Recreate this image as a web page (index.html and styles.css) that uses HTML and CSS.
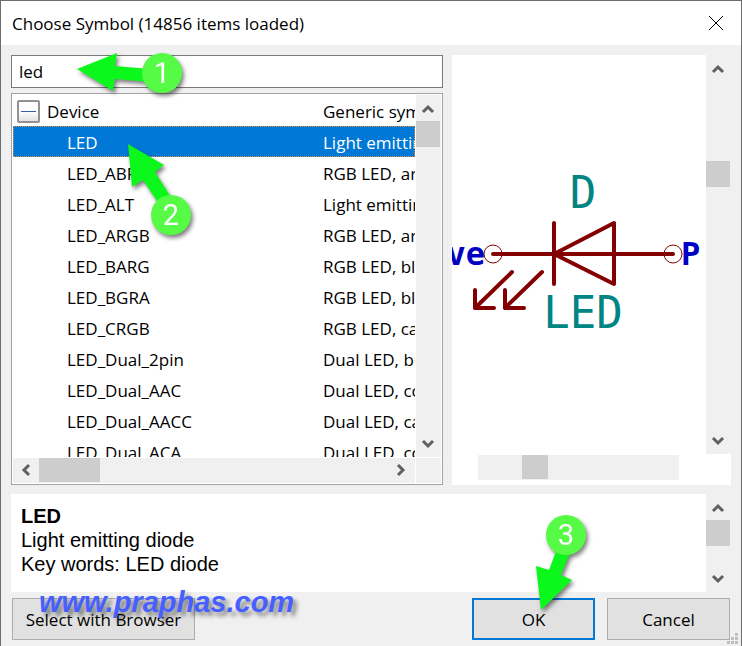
FILE: index.html
```
<!DOCTYPE html>
<html lang="en">

<head>
    <meta charset="UTF-8">
    <meta name="viewport" content="width=device-width, initial-scale=1.0">
    <title>Choose Symbol</title>
    <link rel="stylesheet" href="styles.css">
</head>

<body>

    <svg class="defs" aria-hidden="true">
        <symbol id="up" viewBox="0 0 12 10"><path d="M0 9L5 4L10 9" /></symbol>
        <symbol id="down" viewBox="0 0 12 10"><path d="M0 2L5 7L10 2" /></symbol>
        <symbol id="left" viewBox="0 0 10 12"><path d="M8 0L3 5L8 10" /></symbol>
        <symbol id="right" viewBox="0 0 10 12"><path d="M1 0L6 5L1 10" /></symbol>
    </svg>

    <div class="dialog">
        <header class="titlebar">
            <h1>Choose Symbol (14856 items loaded)</h1>
            <button class="close" aria-label="Close">
                <svg width="16" height="16" viewBox="0 0 16 16"><path d="M1 1L15 15M15 1L1 15" /></svg>
            </button>
        </header>

        <main class="panes">
            <div class="chooser">
                <div class="search">
                    <input type="text" value="led" aria-label="Filter">
                    <svg class="callout callout-1" width="120" height="60" viewBox="70 45 120 60">
                        <path d="M77 69L117 53L115 66L150 69V82L115 79L113 91Z" />
                        <circle cx="162" cy="73" r="20" />
                        <text x="162" y="83">1</text>
                    </svg>
                </div>

                <div class="tree">
                    <div class="tree-view">
                        <table>
                            <colgroup>
                                <col class="col-name">
                                <col>
                            </colgroup>
                            <tr class="lib">
                                <td><button class="toggle" aria-label="Collapse"></button>Device</td>
                                <td>Generic symbols</td>
                            </tr>
                            <tr class="selected"><td>LED</td><td>Light emitting diode</td></tr>
                            <tr><td>LED_ABRG</td><td>RGB LED, anode/blue/red/green</td></tr>
                            <tr><td>LED_ALT</td><td>Light emitting diode, alternative</td></tr>
                            <tr><td>LED_ARGB</td><td>RGB LED, anode/red/green/blue</td></tr>
                            <tr><td>LED_BARG</td><td>RGB LED, blue/anode/red/green</td></tr>
                            <tr><td>LED_BGRA</td><td>RGB LED, blue/green/red/anode</td></tr>
                            <tr><td>LED_CRGB</td><td>RGB LED, cathode/red/green/blue</td></tr>
                            <tr><td>LED_Dual_2pin</td><td>Dual LED, bidirectional</td></tr>
                            <tr><td>LED_Dual_AAC</td><td>Dual LED, common cathode</td></tr>
                            <tr><td>LED_Dual_AACC</td><td>Dual LED, cathodes on pins</td></tr>
                            <tr><td>LED_Dual_ACA</td><td>Dual LED, common cathode</td></tr>
                        </table>
                    </div>
                    <div class="vbar">
                        <button aria-label="Scroll up"><svg width="12" height="10"><use href="#up" /></svg></button>
                        <div class="track"><div class="thumb"></div></div>
                        <button aria-label="Scroll down"><svg width="12" height="10"><use href="#down" /></svg></button>
                    </div>
                    <div class="hbar">
                        <button aria-label="Scroll left"><svg width="10" height="12"><use href="#left" /></svg></button>
                        <div class="track"><div class="thumb"></div></div>
                        <button aria-label="Scroll right"><svg width="10" height="12"><use href="#right" /></svg></button>
                    </div>
                    <div class="corner"></div>
                    <svg class="callout callout-2" width="80" height="110" viewBox="120 135 80 110">
                        <path d="M128 144L164 165L155 172L174 202L163 210L143 180L132 187Z" />
                        <circle cx="171" cy="215" r="20" />
                        <text x="171" y="225">2</text>
                    </svg>
                </div>
            </div>

            <div class="preview">
                <svg class="symbol" viewBox="0 0 254 399">
                    <g class="body">
                        <path d="M41 199H221" />
                        <path d="M102 168V229" />
                        <path d="M162 168V229L102 199Z" />
                        <path d="M60 217L23 253M23 235V253H42" />
                        <path d="M90 217L53 253M53 235V253H72" />
                    </g>
                    <g class="pins">
                        <circle cx="41" cy="199" r="9" />
                        <circle cx="221" cy="199" r="9" />
                    </g>
                    <text class="field" x="131" y="153">D</text>
                    <text class="field" x="131" y="273">LED</text>
                    <text class="pin-name pin-left" x="33" y="210">ve</text>
                    <text class="pin-name" x="229" y="210">P</text>
                </svg>
                <div class="vbar">
                    <button aria-label="Scroll up"><svg width="12" height="10"><use href="#up" /></svg></button>
                    <div class="track"><div class="thumb"></div></div>
                    <button aria-label="Scroll down"><svg width="12" height="10"><use href="#down" /></svg></button>
                </div>
                <div class="hbar">
                    <div class="track"><div class="thumb"></div></div>
                </div>
            </div>
        </main>

        <section class="details">
            <div class="details-text">
                <h2>LED</h2>
                <p>Light emitting diode</p>
                <p>Key words: LED diode</p>
            </div>
            <div class="vbar">
                <button aria-label="Scroll up"><svg width="12" height="10"><use href="#up" /></svg></button>
                <div class="track"><div class="thumb"></div></div>
                <button aria-label="Scroll down"><svg width="12" height="10"><use href="#down" /></svg></button>
            </div>
        </section>

        <footer class="buttons">
            <button class="btn browser">Select with Browser</button>
            <div class="ok-wrap">
                <button class="btn ok">OK</button>
                <svg class="callout callout-3" width="70" height="110" viewBox="526 510 70 110">
                    <path d="M541 610L536 566L549 570L558 546L572 548L561 575L572 580Z" />
                    <circle cx="566" cy="535" r="20" />
                    <text x="566" y="545">3</text>
                </svg>
            </div>
            <button class="btn">Cancel</button>
            <span class="watermark">www.praphas.com</span>
            <svg class="grip" width="11" height="11" viewBox="0 0 11 11">
                <path d="M8 0h3v3h-3zM4 4h3v3h-3zM8 4h3v3h-3zM0 8h3v3h-3zM4 8h3v3h-3zM8 8h3v3h-3z" />
            </svg>
        </footer>
    </div>

</body>

</html>
```
FILE: styles.css
```
* {
    box-sizing: border-box;
}

html,
body {
    margin: 0;
    height: 100%;
}

body,
button,
input {
    font-family: "Open Sans", "Noto Sans", sans-serif;
    font-size: 17px;
    color: #000;
}

button {
    padding: 0;
    border: 0;
    background: none;
}

.defs {
    position: absolute;
    width: 0;
    height: 0;
}

.dialog {
    display: flex;
    flex-direction: column;
    height: 100vh;
    min-height: 400px;
    background: #f0f0f0;
    border: 1px solid #6d6d70;
    border-bottom: 0;
}

.titlebar {
    display: flex;
    align-items: center;
    justify-content: space-between;
    height: 44px;
    padding: 0 17px 0 11px;
    background: #fff;
}

.titlebar h1 {
    margin: 0;
    font-size: 17px;
    font-weight: normal;
}

.close svg {
    display: block;
    fill: none;
    stroke: #000;
}

/* search + tree on the left, preview on the right */
.panes {
    flex: 1;
    min-height: 0;
    display: grid;
    grid-template-columns: minmax(0, 432fr) minmax(0, 279fr);
    grid-template-rows: minmax(0, 1fr);
    gap: 9px;
    padding: 10px 10px 9px;
}

.chooser {
    display: flex;
    flex-direction: column;
    gap: 5px;
}

.search {
    position: relative;
}

.search input {
    display: block;
    width: 100%;
    height: 33px;
    padding: 0 7px;
    border: 1px solid #7a7a7a;
    border-radius: 0;
    background: #fff;
    outline: 0;
}

.tree {
    position: relative;
    flex: 1;
    min-height: 0;
    display: grid;
    grid-template-columns: minmax(0, 1fr) 25px;
    grid-template-rows: minmax(0, 1fr) 25px;
    gap: 1px;
    padding: 1px;
    border: 1px solid #a0a3a8;
    background: #fff;
}

.tree-view {
    overflow: hidden;
}

.tree table {
    width: 100%;
    table-layout: fixed;
    border-collapse: collapse;
}

.tree .col-name {
    width: 310px;
}

.tree td {
    height: 31px;
    padding: 2px 0 0;
    line-height: 29px;
    white-space: nowrap;
    overflow: hidden;
}

.tree td:first-child {
    padding-left: 54px;
}

.tree .lib td:first-child {
    padding-left: 4px;
}

.tree .selected {
    background: #0078d7;
    color: #fff;
    outline: 1px dotted #e08a3c;
    outline-offset: -1px;
}

.toggle {
    width: 23px;
    height: 23px;
    margin: -4px 7px 0 0;
    vertical-align: middle;
    border: 2px solid #919191;
    border-radius: 2px;
    background: linear-gradient(#3b5bb0, #3b5bb0) center / 15px 1px no-repeat, linear-gradient(#fff 50%, #e2e2e2);
}

.corner {
    background: #f0f0f0;
}

/* scrollbars */
.vbar,
.hbar {
    display: flex;
    background: #f0f0f0;
}

.vbar {
    flex-direction: column;
    width: 25px;
}

.vbar button,
.hbar button {
    display: flex;
    align-items: center;
    justify-content: center;
    flex: none;
    width: 25px;
    height: 26px;
}

.hbar button {
    width: 26px;
    height: 25px;
}

.vbar svg,
.hbar svg {
    overflow: visible;
    fill: none;
    stroke: #606060;
    stroke-width: 3;
}

.defs symbol {
    overflow: visible;
}

.track {
    flex: 1;
}

.thumb {
    width: 24px;
    height: 26px;
    background: #cdcdcd;
}

.tree .hbar .thumb {
    width: 61px;
    height: 24px;
}

.preview {
    display: grid;
    grid-template-columns: minmax(0, 1fr) 25px;
    grid-template-rows: minmax(0, 1fr) 31px;
    background: #fff;
}

.preview .track {
    padding-top: 80px;
}

.preview .hbar {
    height: 25px;
    margin: 1px 27px 0 26px;
}

.preview .hbar .track {
    padding: 0 0 0 44px;
}

.preview .hbar .thumb {
    width: 26px;
    height: 24px;
}

.symbol {
    width: 100%;
    height: 100%;
    overflow: hidden;
}

.symbol .body {
    fill: none;
    stroke: #840000;
    stroke-width: 4;
    stroke-linecap: round;
    stroke-linejoin: round;
}

.symbol .pins {
    fill: none;
    stroke: #840000;
}

.symbol text {
    font-family: "DejaVu Sans Mono", monospace;
}

.symbol .field {
    font-size: 44px;
    text-anchor: middle;
    fill: #008484;
}

.symbol .pin-name {
    font-size: 32px;
    font-weight: bold;
    fill: #0000c2;
}

.symbol .pin-left {
    text-anchor: end;
}

.details {
    display: flex;
    height: 98px;
    margin: 0 10px;
    background: #fff;
}

.details-text {
    flex: 1;
    padding: 10px;
    font-family: "Liberation Sans", Arial, sans-serif;
    font-size: 20px;
    line-height: 24px;
}

.details h2,
.details p {
    margin: 0;
    font-size: 20px;
}

.buttons {
    position: relative;
    display: flex;
    gap: 12px;
    padding: 6px 11px;
}

.btn {
    width: 123px;
    height: 42px;
    border: 1px solid #adadad;
    background: #e1e1e1;
}

.browser {
    width: 183px;
    margin-right: auto;
}

.ok {
    border: 2px solid #0078d7;
}

.ok-wrap {
    position: relative;
}

.watermark {
    position: absolute;
    left: 38px;
    top: -7px;
    font: italic bold 29px/34px "Liberation Sans", Arial, sans-serif;
    color: #465fff;
    text-shadow: 4px 4px 4px rgba(0, 0, 0, 0.45);
    pointer-events: none;
}

.grip {
    position: absolute;
    right: 3px;
    bottom: 2px;
    fill: #bfbfbf;
}

/* numbered arrows lying over the dialog */
.callout {
    position: absolute;
    z-index: 1;
    pointer-events: none;
    filter: drop-shadow(2px 3px 2px rgba(0, 0, 0, 0.5));
}

.callout path {
    fill: #0cf81c;
}

.callout circle {
    fill: #55fb45;
}

.callout text {
    font: 29px Roboto, Arial, sans-serif;
    text-anchor: middle;
    fill: #fff;
}

.callout-1 {
    left: 59px;
    top: -10px;
}

.callout-2 {
    left: 108px;
    top: 41px;
}

.callout-3 {
    left: 54px;
    top: -88px;
}
```
